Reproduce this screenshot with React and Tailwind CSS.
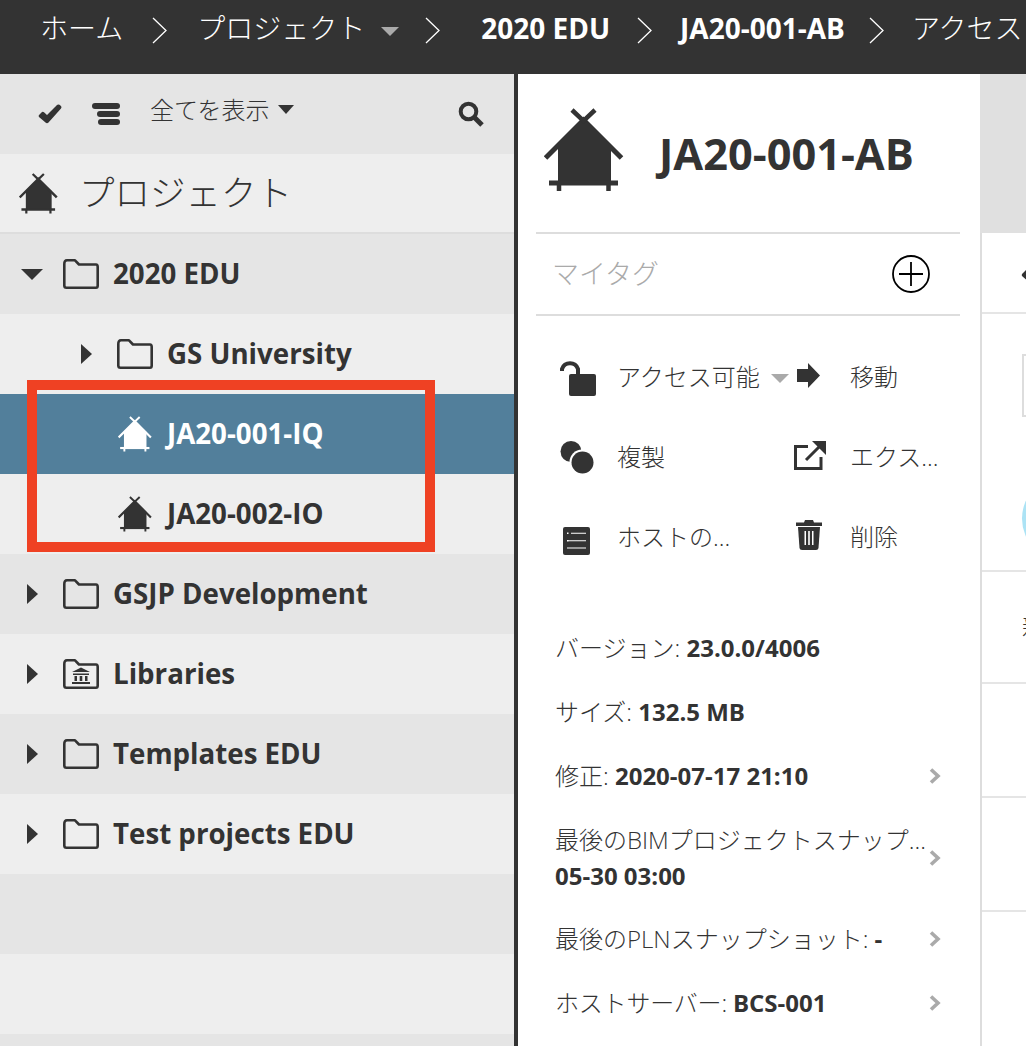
import React from 'react';

const DARK = '#333333';

// hut logo used for projects, drawn on a 80x84 box
const Hut = ({ className, color = DARK }) => (
    <svg viewBox="0 0 80 84" className={className} fill="none">
        <path d="M39.5 12 L14 37 V75 H67 V37 Z" fill={color} />
        <path d="M1.5 50 L39.5 12 L77.5 50" stroke={color} strokeWidth="5" />
        <path d="M28 2 L39.5 13 L51 2" stroke={color} strokeWidth="4.5" />
        <path d="M5 75 H74" stroke={color} strokeWidth="5" />
        <path d="M15 75 V83 M64.5 75 V83" stroke={color} strokeWidth="4.5" />
    </svg>
);

const Check = ({ className }) => (
    <svg viewBox="0 0 24 20" className={className} fill={DARK}>
        <path d="M1 11 L4 8 Q5 7.3 6 8.2 L9 11 L19 1 Q20 0 21.5 0.8 L23 2 Q24 3.2 23 4.5 L10.5 18.5 Q9 20 7.5 18.5 L1 13 Q0.2 12 1 11 Z" />
    </svg>
);

const Folder = ({ library }) => (
    <svg viewBox="0 0 36 30" className="w-9 h-[30px] shrink-0" fill="none">
        <path d="M1.3 5 Q1.3 1.3 4 1.3 H12 L16 5.5 H33 Q34.7 5.5 34.7 8 V26.5 Q34.7 28.7 33 28.7 H3.5 Q1.3 28.7 1.3 26.5 Z" stroke={DARK} strokeWidth="2.6" strokeLinejoin="round" />
        {library && <path d="M18 8.5 L27 13 H9 Z M10 14.5 H26 V16 H10 Z M11.5 17 H14 V22 H11.5 Z M16.7 17 H19.3 V22 H16.7 Z M22 17 H24.5 V22 H22 Z M9 23 H27 V25 H9 Z" fill={DARK} />}
    </svg>
);

const Caret = ({ open }) => open
    ? <div className="w-0 h-0 border-x-[11px] border-x-transparent border-t-[11px] border-t-[#333]" />
    : <div className="w-0 h-0 ml-[6px] border-y-[10px] border-y-transparent border-l-[11px] border-l-[#333]" />;

const Crumb = ({ children, bold }) => (
    <span className={`text-[28px] leading-[34px] whitespace-nowrap text-white ${bold ? 'font-bold' : 'font-light'}`}>{children}</span>
);

const Sep = ({ className }) => (
    <svg viewBox="0 0 15 27" className={`w-[15px] h-[27px] shrink-0 mt-[6px] ${className}`} fill="none">
        <path d="M1 1 L14 13.5 L1 26" stroke="#fff" strokeWidth="1.3" />
    </svg>
);

const TopBar = () => (
    <div className="h-[74px] bg-[#333] flex items-start pt-[11px] pl-[40px] overflow-hidden shrink-0">
        <Crumb>ホーム</Crumb>
        <Sep className="ml-[29px]" />
        <span className="ml-[30px]"><Crumb>プロジェクト</Crumb></span>
        <div className="ml-[16px] mt-[16px] w-0 h-0 border-x-[9px] border-x-transparent border-t-[9px] border-t-[#aaa]" />
        <Sep className="ml-[26px]" />
        <span className="ml-[41px]"><Crumb bold>2020 EDU</Crumb></span>
        <Sep className="ml-[27px]" />
        <span className="ml-[28px]"><Crumb bold>JA20-001-AB</Crumb></span>
        <Sep className="ml-[24px]" />
        <span className="ml-[28px]"><Crumb>アクセス</Crumb></span>
    </div>
);

const treeRows = [
    { label: '2020 EDU', caret: 'open', icon: 'folder', bg: 'bg-[#e5e5e5]' },
    { label: 'GS University', caret: 'closed', icon: 'folder', bg: 'bg-[#eeeeee]', indent: true },
    { label: 'JA20-001-IQ', icon: 'hut', bg: 'bg-[#527f9b]', selected: true },
    { label: 'JA20-002-IO', icon: 'hut', bg: 'bg-[#eeeeee]' },
    { label: 'GSJP Development', caret: 'closed', icon: 'folder', bg: 'bg-[#e5e5e5]' },
    { label: 'Libraries', caret: 'closed', icon: 'library', bg: 'bg-[#eeeeee]' },
    { label: 'Templates EDU', caret: 'closed', icon: 'folder', bg: 'bg-[#e5e5e5]' },
    { label: 'Test projects EDU', caret: 'closed', icon: 'folder', bg: 'bg-[#eeeeee]' },
];

const TreeRow = ({ row }) => {
    let lead;
    if (row.icon === 'hut') {
        lead = (
            <div className="pl-[118px] w-[167px] shrink-0">
                <Hut className="w-[34px] h-[36px]" color={row.selected ? '#ffffff' : DARK} />
            </div>
        );
    } else {
        lead = (
            <div className={`flex items-center shrink-0 ${row.indent ? 'pl-[75px] w-[167px]' : 'pl-[21px] w-[113px]'}`}>
                <div className="w-[22px] flex"><Caret open={row.caret === 'open'} /></div>
                <div className="ml-[20px]"><Folder library={row.icon === 'library'} /></div>
            </div>
        );
    }
    return (
        <div className={`h-20 flex items-center ${row.bg}`}>
            {lead}
            <span className={`text-[27.7px] font-bold whitespace-nowrap mt-[-1px] ${row.selected ? 'text-white' : 'text-[#333]'}`}>{row.label}</span>
        </div>
    );
};

const Sidebar = () => (
    <div className="w-[518px] shrink-0 border-r-4 border-[#333] bg-[#e5e5e5] flex flex-col overflow-hidden">
        <div className="h-20 flex items-center shrink-0">
            <Check className="w-6 h-5 ml-[38px]" />
            <svg viewBox="0 0 28 22" className="w-7 h-[22px] ml-[30px]" fill={DARK}>
                <rect x="0" y="0" width="28" height="6" rx="3" />
                <rect x="5" y="8" width="23" height="6" rx="3" />
                <rect x="6" y="16" width="22" height="6" rx="3" />
            </svg>
            <span className="ml-[30px] text-[24px] font-light text-[#333] mt-[-8px]">全てを表示</span>
            <div className="ml-[8px] mt-[-10px] w-0 h-0 border-x-[8.5px] border-x-transparent border-t-[9px] border-t-[#333]" />
            <svg viewBox="0 0 26 26" className="w-[26px] h-[26px] ml-auto mr-[30px]" fill="none" stroke={DARK}>
                <circle cx="10.5" cy="10.5" r="7.8" strokeWidth="4" />
                <path d="M16 16 L24 24" strokeWidth="5" />
            </svg>
        </div>
        <div className="h-20 flex items-center shrink-0 bg-[#eeeeee] border-b-2 border-[#dddddd]">
            <Hut className="w-[39px] h-[41px] ml-[19px]" />
            <span className="ml-[21px] text-[35.5px] font-light text-[#333]">プロジェクト</span>
        </div>
        {treeRows.map((row) => <TreeRow key={row.label} row={row} />)}
        <div className="h-20 shrink-0 bg-[#e5e5e5]" />
        <div className="h-20 shrink-0 bg-[#eeeeee]" />
    </div>
);

const Action = ({ icon, label, caret, second }) => (
    <div className="h-20 flex items-center">
        <div className={`${second ? 'w-[61px]' : 'w-[66px]'} shrink-0 flex items-center`}>{icon}</div>
        <span className="text-[24px] font-light text-[#333] whitespace-nowrap">{label}</span>
        {caret && <div className="ml-[11px] mt-[2px] w-0 h-0 border-x-[9px] border-x-transparent border-t-[9px] border-t-[#aaa]" />}
    </div>
);

const icons = {
    lock: (
        <svg viewBox="0 0 38 38" className="w-[38px] h-[38px] ml-[7px]" fill="none">
            <path d="M4 13 V11 A8.5 8.5 0 0 1 20 11 V20" stroke={DARK} strokeWidth="4" />
            <rect x="11" y="16" width="27" height="22" rx="2" fill={DARK} />
        </svg>
    ),
    move: (
        <svg viewBox="0 0 23 25" className="w-[23px] h-[25px] ml-[8px] mt-[-3px]" fill={DARK}>
            <path d="M0 6 H11 V0 L23 12.5 L11 25 V19 H0 Z" />
        </svg>
    ),
    copy: (
        <svg viewBox="0 0 34 34" className="w-[34px] h-[34px] ml-[9px]" fill={DARK}>
            <circle cx="11" cy="11.5" r="10.5" />
            <circle cx="22" cy="22" r="12.5" fill="#fff" />
            <circle cx="22.5" cy="22.5" r="11" />
        </svg>
    ),
    exportIcon: (
        <svg viewBox="0 0 32 29" className="w-8 h-[29px] ml-[5px] mt-[-3px]" fill="none" stroke={DARK}>
            <path d="M14 5.5 H1.5 V27.5 H27 V16" strokeWidth="3" />
            <path d="M12 19 L26 5" strokeWidth="3" />
            <path d="M18 0 H32 V14 Z" fill={DARK} strokeWidth="0" />
        </svg>
    ),
    host: (
        <svg viewBox="0 0 27 28" className="w-[27px] h-7 ml-[12px] mt-[8px]" fill={DARK}>
            <rect width="27" height="28" rx="2" />
            <path d="M4 5.5 H5.5 V7 H4 Z M8 5.7 H23 V6.7 H8 Z M4 13 H5.5 V14.5 H4 Z M4 13.3 H23 V14.3 H4 Z M4 20.5 H23 V21.5 H4 Z" fill="#fff" />
        </svg>
    ),
    trash: (
        <svg viewBox="0 0 26 30" className="w-[26px] h-[30px] ml-[7px] mt-[-4px]" fill={DARK}>
            <path d="M9 0 H17 L18 2.5 H26 V6 H0 V2.5 H8 Z" />
            <path d="M2 7 H24 L22.5 28 Q22.3 30 20 30 H6 Q3.7 30 3.5 28 Z" />
            <path d="M8.5 11 H10 V25 H8.5 Z M12.2 11 H13.8 V25 H12.2 Z M16 11 H17.5 V25 H16 Z" fill="#fff" />
        </svg>
    ),
};

const Chevron = () => (
    <svg viewBox="0 0 12 16" className="w-3 h-4 shrink-0 ml-[2px]" fill="none" stroke="#aaaaaa">
        <path d="M2 1.5 L9 8 L2 14.5" strokeWidth="3.6" />
    </svg>
);

const InfoRow = ({ label, value, arrow, two, tight }) => (
    <div className={`flex items-center pl-[37px] pr-[21px] text-[24px] text-[#333] ${two ? 'h-[99px] leading-9' : 'h-16'}`}>
        <div className="flex-1 min-w-0">
            {two ? (
                <>
                    <div className="font-light whitespace-nowrap">{label}</div>
                    <div className="font-bold">{value}</div>
                </>
            ) : (
                <div className="whitespace-nowrap"><span className={`font-light ${tight ? 'tracking-[-0.2px]' : ''}`}>{label}: </span><span className="font-bold">{value}</span></div>
            )}
        </div>
        {arrow && <Chevron />}
    </div>
);

const Details = () => (
    <div className="w-[462px] shrink-0 bg-white flex flex-col overflow-hidden">
        <div className="ml-[18px] mr-[20px] h-[160px] shrink-0 border-b-2 border-[#dddddd] flex items-center">
            <Hut className="w-[80px] h-[84px] ml-[8px] mt-[-6px]" />
            <h1 className="ml-[35px] text-[43.3px] font-bold text-[#333] whitespace-nowrap mt-[2px]">JA20-001-AB</h1>
        </div>
        <div className="ml-[18px] mr-[20px] h-[82px] shrink-0 border-b-2 border-[#dddddd] flex items-center justify-between">
            <span className="ml-[16px] text-[27px] font-light text-[#aaaaaa]">マイタグ</span>
            <svg viewBox="0 0 38 38" className="w-[38px] h-[38px] mr-[30px]" fill="none" stroke="#000">
                <circle cx="19" cy="19" r="18" strokeWidth="1.8" />
                <path d="M19 7 V31 M7 19 H31" strokeWidth="1.8" />
            </svg>
        </div>
        <div className="grid grid-cols-[238px_1fr] pl-[33px] pr-[18px] pt-[21px] shrink-0">
            <Action icon={icons.lock} label="アクセス可能" caret />
            <Action icon={icons.move} label="移動" second />
            <Action icon={icons.copy} label="複製" />
            <Action icon={icons.exportIcon} label="エクス..." second />
            <Action icon={icons.host} label="ホストの..." />
            <Action icon={icons.trash} label="削除" second />
        </div>
        <div className="pt-[39px] mr-[18px]">
            <InfoRow label="バージョン" value="23.0.0/4006" />
            <InfoRow label="サイズ" value="132.5 MB" />
            <InfoRow label="修正" value="2020-07-17 21:10" arrow />
            <InfoRow label="最後のBIMプロジェクトスナップ..." value="05-30 03:00" arrow two />
            <InfoRow label="最後のPLNスナップショット" value="-" arrow />
            <InfoRow label="ホストサーバー" value="BCS-001" arrow tight />
        </div>
    </div>
);

// next panel, only its left edge shows in the window
const RightPeek = () => (
    <div className="w-[46px] shrink-0 bg-white flex flex-col overflow-hidden">
        <div className="h-[159px] shrink-0 bg-[#e0e0e0]" />
        <div className="flex-1 border-l-2 border-[#dddddd] flex flex-col w-[200px]">
            <div className="h-[81px] border-b-2 border-[#e5e5e5] shrink-0 flex items-center pl-[39px]">
                <Check className="w-[30px] h-[25px] shrink-0" />
            </div>
            <div className="h-[258px] border-b-2 border-[#e5e5e5] shrink-0 pl-[40px] pt-[40px]">
                <div className="w-[120px] h-[63px] border-2 border-[#dddddd]" />
                <div className="w-[85px] h-[85px] mt-[59px] rounded-full bg-[#ace3f5]" />
            </div>
            <div className="h-[112px] border-b-2 border-[#e5e5e5] shrink-0 pl-[40px] flex items-center">
                <span className="text-[24px] font-light text-[#333]">新</span>
            </div>
            <div className="h-[114px] border-b-2 border-[#e5e5e5] shrink-0" />
            <div className="h-[114px] border-b-2 border-[#e5e5e5] shrink-0" />
        </div>
    </div>
);

export default function App() {
    return (
        <div className="relative w-[1026px] h-[1046px] overflow-hidden flex flex-col font-['Open_Sans','Noto_Sans_CJK_JP',sans-serif]">
            <TopBar />
            <div className="flex flex-1 min-h-0">
                <Sidebar />
                <Details />
                <RightPeek />
            </div>
            {/* red annotation box from the screenshot */}
            <div className="absolute left-[27px] top-[380px] w-[408px] h-[172px] border-[10px] border-[#ef4123]" />
        </div>
    );
}
